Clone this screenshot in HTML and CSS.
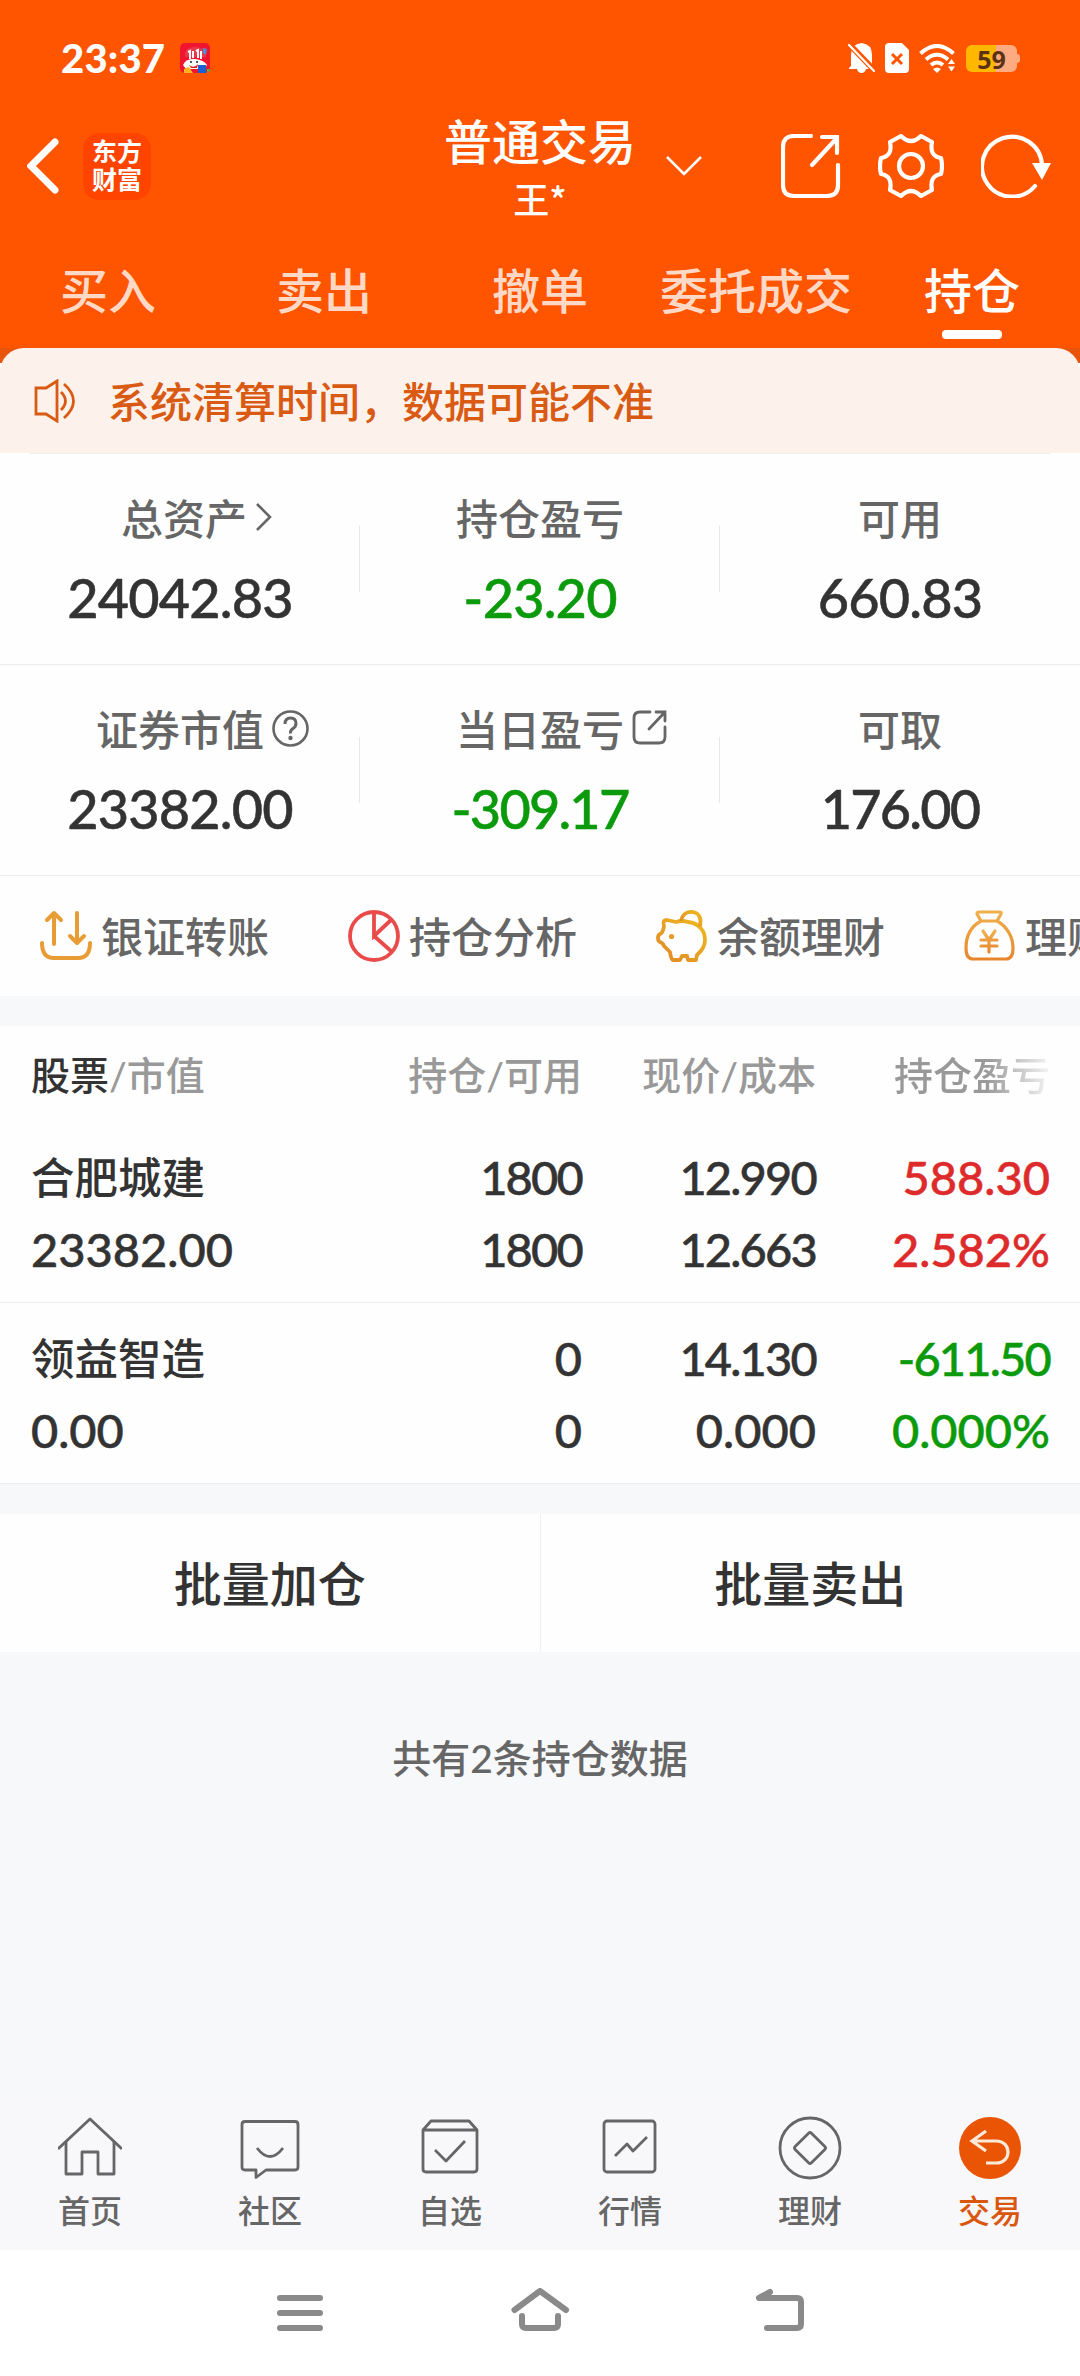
FILE: index.html
```html
<!DOCTYPE html>
<html lang="zh-CN">
<head>
    <meta charset="UTF-8">
    <meta name="viewport" content="width=device-width, initial-scale=1.0">
    <title>普通交易</title>
    <link rel="stylesheet" href="styles.css">
</head>
<body>
    <header class="header">
        <div class="status-bar">
            <span class="time">23:37</span>
            <svg class="app-badge" width="30" height="30" viewBox="0 0 30 30">
                <rect width="30" height="30" rx="5" fill="#f0142f"/>
                <path d="M5 14Q4 4 15 4t11 10z" fill="#e8384a"/>
                <path d="M23 5l4 1-1 6-3-2z" fill="#4f8fd8"/>
                <path d="M8 9l2-1v8M13 8v7M16 8l2-1v8M21 8v8" stroke="#fff" stroke-width="2" fill="none"/>
                <path d="M3 22Q6 15 15 16t12 6l-3 4H6z" fill="#fff"/>
                <path d="M9 22q5 4 9-1l-1 4h-6z" fill="#d22"/>
                <circle cx="11" cy="19" r="1" fill="#222"/>
                <circle cx="17" cy="19" r="1" fill="#222"/>
                <path d="M4 26l5-2 4 6H4z" fill="#ffb51b"/>
                <path d="M18 22h8v8h-8z" fill="#1d5fd0"/>
                <path d="M27 26h3v2l-3 2z" fill="#4fae4a"/>
            </svg>
            <div class="status-icons">
                <svg width="27" height="30" viewBox="0 0 27 30">
                    <path d="M3 23V12Q3 1 13.500 0Q24 1 24 12v11l2 2v1H18q-1 4-4.500 4T9 26H1v-1z" fill="#fff"/>
                    <path d="M-1 -1L28 29" stroke="#ff5500" stroke-width="6"/>
                    <path d="M1 2L26 28" stroke="#fff" stroke-width="2.200" stroke-linecap="round"/>
                </svg>
                <svg width="24" height="30" viewBox="0 0 24 30">
                    <path d="M4 0h13l7 7v19q0 4-4 4H4q-4 0-4-4V4q0-4 4-4z" fill="#fff"/>
                    <path d="M7 11l10 10M17 11L7 21" stroke="#ff5500" stroke-width="3"/>
                </svg>
                <svg width="37" height="29" viewBox="0 0 37 29">
                    <g fill="none" stroke="#fff" stroke-width="4">
                        <path d="M1.500 9.500Q18 -5.500 34.500 9.500"/>
                        <path d="M7 15.500Q18 6 29 15.500"/>
                        <path d="M12 21Q18 16 24 21"/>
                    </g>
                    <path d="M14 25q4-3 8 0l-4 4zM29 20l3.500-5 3.500 5zM29 22.500l3.500 5 3.500-5z" fill="#fff"/>
                </svg>
                <div class="battery">59</div>
            </div>
        </div>

        <div class="nav-bar">
            <div class="nav-left">
                <svg width="32" height="56" viewBox="0 0 32 56">
                    <path d="M28 4L4 28l24 24" fill="none" stroke="#fff" stroke-width="7" stroke-linecap="round"/>
                </svg>
                <div class="logo">东方<br>财富</div>
            </div>
            <div class="nav-title">
                <h1>普通交易</h1>
                <p>王*</p>
            </div>
            <div class="nav-right">
                <svg class="chevron" width="36" height="20" viewBox="0 0 36 20">
                    <path d="M1 1l17 17L35 1" fill="none" stroke="#fff" stroke-width="2.600"/>
                </svg>
                <svg class="share" width="60" height="64" viewBox="0 0 60 64">
                    <g fill="none" stroke="#fff" stroke-width="4.200" stroke-linecap="round">
                        <path d="M30 2H13Q2 2 2 13v38q0 11 11 11h33q11 0 11-11V31"/>
                        <path d="M41 3h15v16M56 4L31 31"/>
                    </g>
                </svg>
                <svg class="gear" width="66" height="64" viewBox="0 0 66 64">
                    <g fill="none" stroke="#fff" stroke-width="4.200" stroke-linejoin="round">
                        <path d="M23 2Q33 12 43 2L54 8Q51 22 63 24Q65 32 63 40Q51 42 54 56L43 62Q33 52 23 62L12 56Q15 42 3 40Q1 32 3 24Q15 22 12 8Z"/>
                        <circle cx="33" cy="32" r="12"/>
                    </g>
                </svg>
                <svg class="refresh" width="70" height="64" viewBox="0 0 70 64">
                    <path d="M54 52A30 30 0 1 1 61 31" fill="none" stroke="#fff" stroke-width="4.200" stroke-linecap="round"/>
                    <path d="M51 29h19l-9 17z" fill="#fff"/>
                </svg>
            </div>
        </div>

        <nav class="tabs">
            <div class="tab">买入</div>
            <div class="tab">卖出</div>
            <div class="tab">撤单</div>
            <div class="tab">委托成交</div>
            <div class="tab active">持仓</div>
        </nav>
    </header>

    <div class="notice-wrap">
        <div class="notice">
            <svg width="42" height="44" viewBox="0 0 42 44">
                <g fill="none" stroke="#d95a12" stroke-width="2.800">
                    <path d="M2 9h10l11-7v40l-11-7H2z"/>
                    <path d="M27 13q9 9 0 18M30 5q19 17 0 34"/>
                </g>
            </svg>
            <span>系统清算时间，数据可能不准</span>
        </div>
    </div>

    <section class="summary">
        <div class="summary-row">
            <div class="cell">
                <div class="label shifted">总资产
                    <svg class="label-icon arrow" width="18" height="30" viewBox="0 0 18 30">
                        <path d="M2 2l13 13L2 28" fill="none" stroke="#666" stroke-width="2.600"/>
                    </svg>
                </div>
                <div class="value">24042.83</div>
            </div>
            <div class="cell">
                <div class="label">持仓盈亏</div>
                <div class="value down">-23.20</div>
            </div>
            <div class="cell">
                <div class="label">可用</div>
                <div class="value">660.83</div>
            </div>
        </div>
        <div class="summary-row">
            <div class="cell">
                <div class="label">证券市值
                    <svg class="label-icon" width="37" height="37" viewBox="0 0 37 37">
                        <circle cx="18.500" cy="18.500" r="17" fill="none" stroke="#666" stroke-width="2.600"/>
                        <path d="M13 14q0-6 5.500-6t5.500 5.500q0 3-3 5t-2.500 5" fill="none" stroke="#666" stroke-width="3"/>
                        <circle cx="18.500" cy="28" r="2.200" fill="#666"/>
                    </svg>
                </div>
                <div class="value">23382.00</div>
            </div>
            <div class="cell">
                <div class="label">当日盈亏
                    <svg class="label-icon" width="36" height="36" viewBox="0 0 36 36">
                        <g fill="none" stroke="#666" stroke-width="2.800" stroke-linecap="round">
                            <path d="M18 2H8Q2 2 2 8v19q0 6 6 6h19q6 0 6-6V17"/>
                            <path d="M24 2h9v9M33 2L17 19"/>
                        </g>
                    </svg>
                </div>
                <div class="value down tight">-309.17</div>
            </div>
            <div class="cell">
                <div class="label">可取</div>
                <div class="value tight">176.00</div>
            </div>
        </div>
    </section>

    <section class="shortcuts">
        <div class="shortcut">
            <svg width="52" height="52" viewBox="0 0 52 52">
                <g fill="none" stroke="#e89c35" stroke-width="4" stroke-linecap="round" stroke-linejoin="round">
                    <path d="M2 33q0 15 12 15h24q12 0 12-15"/>
                    <path d="M14 34V3M7 10l7-7 7 7M37 3v30M30 26l7 7 7-7"/>
                </g>
            </svg>
            <span>银证转账</span>
        </div>
        <div class="shortcut">
            <svg width="52" height="52" viewBox="0 0 52 52">
                <g fill="none" stroke="#e94b4b" stroke-width="3.800">
                    <circle cx="26" cy="26" r="24"/>
                    <path d="M26 2v24l17-16M26 26l17 15"/>
                </g>
            </svg>
            <span>持仓分析</span>
        </div>
        <div class="shortcut">
            <svg width="52" height="52" viewBox="0 0 52 52">
                <defs>
                    <linearGradient id="pig" x1="0" y1="1" x2="1" y2="0">
                        <stop offset="0" stop-color="#e0882a"/>
                        <stop offset="1" stop-color="#efb91e"/>
                    </linearGradient>
                </defs>
                <g fill="none" stroke="url(#pig)" stroke-width="3.800" stroke-linejoin="round">
                    <path d="M8 16Q6 10 11 10L20 12Q26 10 32 12C43 13 49 21 49 30Q49 38 41 45L40 50H32L31 46H26L24 50H17Q15 50 14 42L8 36Q7 33 4 32Q2 31 2 28Q2 25 4 24Q7 23 8 16Z"/>
                    <path d="M25 11C27 -1 43 -1 44.500 10L44 17"/>
                </g>
                <circle cx="15.500" cy="26.500" r="2.600" fill="#e39a28"/>
            </svg>
            <span>余额理财</span>
        </div>
        <div class="shortcut">
            <svg width="52" height="52" viewBox="0 0 52 52">
                <defs>
                    <linearGradient id="bag" x1="0" y1="1" x2="0" y2="0">
                        <stop offset="0" stop-color="#e8862e"/>
                        <stop offset="1" stop-color="#efb04c"/>
                    </linearGradient>
                </defs>
                <g fill="none" stroke="url(#bag)" stroke-width="3.200" stroke-linecap="round" stroke-linejoin="round">
                    <path d="M17 11L13 4Q13 2 15 2H35Q38 2 37 4L33 11ZM17 11C6 17 2 28 2 38Q2 49 9 49H42Q49 49 49 38C49 28 44 17 33 11"/>
                    <path d="M19 21l6 9 6-9M25 30v12M17 30h16M17 36h16"/>
                </g>
            </svg>
            <span>理财</span>
        </div>
    </section>

    <section class="holdings">
        <div class="row head">
            <div><b>股票</b>/市值</div>
            <div>持仓/可用</div>
            <div>现价/成本</div>
            <div class="fade">持仓盈亏</div>
        </div>
        <div class="row">
            <div><span class="name">合肥城建</span>23382.00</div>
            <div class="tight">1800<br>1800</div>
            <div class="tight">12.990<br>12.663</div>
            <div class="up">588.30<br>2.582%</div>
        </div>
        <div class="row">
            <div><span class="name">领益智造</span>0.00</div>
            <div>0<br>0</div>
            <div><span class="tight">14.130</span><br>0.000</div>
            <div class="down"><span class="tight">-611.50</span><br>0.000%</div>
        </div>
    </section>

    <section class="batch">
        <div class="batch-btn">批量加仓</div>
        <div class="batch-btn">批量卖出</div>
    </section>

    <p class="count">共有2条持仓数据</p>

    <footer class="tab-bar">
        <div class="tab-item">
            <svg width="64" height="64" viewBox="0 0 64 64">
                <g fill="none" stroke="#666" stroke-width="2.800" stroke-linejoin="round">
                    <path d="M0 33L32 3l32 30"/>
                    <path d="M8 26v32h16V36h16v22h16V26"/>
                </g>
            </svg>
            <span>首页</span>
        </div>
        <div class="tab-item">
            <svg width="64" height="64" viewBox="0 0 64 64">
                <g fill="none" stroke="#666" stroke-width="2.800" stroke-linejoin="round">
                    <path d="M7 5.500h50q3 0 3 3V51q0 3-3 3H28l-10 7.500V54H7q-3 0-3-3V8.500q0-3 3-3z"/>
                    <path d="M19 32q13 17 26 0"/>
                </g>
            </svg>
            <span>社区</span>
        </div>
        <div class="tab-item">
            <svg width="64" height="64" viewBox="0 0 64 64">
                <g fill="none" stroke="#666" stroke-width="2.800" stroke-linejoin="round">
                    <path d="M5 14l8-9h38l8 9v39q0 3-3 3H8q-3 0-3-3zM5 14h54"/>
                    <path d="M17 34l11 11 19-20"/>
                </g>
            </svg>
            <span>自选</span>
        </div>
        <div class="tab-item">
            <svg width="64" height="64" viewBox="0 0 64 64">
                <g fill="none" stroke="#666" stroke-width="2.800" stroke-linejoin="round">
                    <rect x="6" y="5" width="51" height="51" rx="3"/>
                    <path d="M17 40l12-12 6 7 14-14"/>
                </g>
            </svg>
            <span>行情</span>
        </div>
        <div class="tab-item">
            <svg width="64" height="64" viewBox="0 0 64 64">
                <g fill="none" stroke="#666" stroke-width="2.800">
                    <circle cx="32" cy="32" r="30"/>
                    <rect x="20.500" y="20.500" width="23" height="23" rx="2" transform="rotate(45 32 32)"/>
                </g>
            </svg>
            <span>理财</span>
        </div>
        <div class="tab-item active">
            <svg width="64" height="64" viewBox="0 0 64 64">
                <circle cx="32" cy="32" r="31" fill="#e95504"/>
                <path d="M28 47h10c16 0 16-22 0-22H15M28 15L14 25l14 10" fill="none" stroke="#ffe9d8" stroke-width="3.200"/>
            </svg>
            <span>交易</span>
        </div>
    </footer>

    <div class="system-nav">
        <svg width="60" height="50" viewBox="0 0 60 50">
            <path d="M10 10h40M10 25h40M10 40h40" stroke="#8a8a8a" stroke-width="6" stroke-linecap="round"/>
        </svg>
        <svg width="60" height="50" viewBox="0 0 60 50">
            <g fill="none" stroke="#8a8a8a" stroke-width="6" stroke-linecap="round" stroke-linejoin="round">
                <path d="M4.500 22L30 3l26 19M12 28v8q0 4 4 4h28q4 0 4-4v-8"/>
            </g>
        </svg>
        <svg width="60" height="50" viewBox="0 0 60 50">
            <path d="M20 4L9 10h38q4 0 4 4v22q0 4-4 4H17" fill="none" stroke="#8a8a8a" stroke-width="6" stroke-linecap="round" stroke-linejoin="round"/>
        </svg>
    </div>
</body>
</html>
```
FILE: styles.css
```css
* {
    box-sizing: border-box;
}

body {
    display: flex;
    flex-direction: column;
    width: 1080px;
    height: 2376px;
    margin: 0;
    overflow: hidden;
    background: #f6f8fa;
    color: #333;
    font-family: Lato, "Noto Sans CJK SC", sans-serif;
    font-weight: 500;
}

svg {
    display: block;
    flex-shrink: 0;
}

h1, p {
    margin: 0;
    font-weight: 500;
}

/* Header */
.header {
    background: #ff5500;
    color: #fff;
}

.status-bar {
    display: flex;
    align-items: center;
    height: 116px;
    padding: 0 61px;
}

.time {
    font-size: 40px;
    font-weight: 900;
    letter-spacing: 0.2px;
}

.app-badge {
    margin-left: 15px;
}

.status-icons {
    display: flex;
    align-items: center;
    gap: 10px;
    margin-left: auto;
}

.battery {
    position: relative;
    width: 51px;
    height: 27px;
    margin-right: 2px;
    border-radius: 6px;
    background: linear-gradient(90deg, #ffb700 30px, #ffab82 30px);
    color: #5c3312;
    font-family: "Open Sans", sans-serif;
    font-size: 25px;
    font-weight: 700;
    line-height: 28px;
    text-align: center;
}

.battery::after {
    content: "";
    position: absolute;
    top: 9px;
    right: -3px;
    width: 3px;
    height: 9px;
    border-radius: 0 3px 3px 0;
    background: #ffab82;
}

.nav-bar {
    display: flex;
    justify-content: space-between;
    height: 100px;
}

.nav-left, .nav-right {
    display: flex;
    align-items: center;
    width: 443px;
}

.nav-left {
    gap: 24px;
    padding-left: 27px;
}

.logo {
    width: 68px;
    height: 67px;
    padding-top: 4px;
    border-radius: 16px;
    background: #ff4400;
    font-size: 25px;
    font-weight: 700;
    line-height: 28px;
    text-align: center;
}

.nav-title {
    padding-top: 2px;
    text-align: center;
}

.nav-title h1 {
    font-size: 48px;
    line-height: 48px;
}

.nav-title p {
    margin-top: 14px;
    font-family: "Noto Sans CJK SC", sans-serif;
    font-size: 36px;
    line-height: 36px;
}

.chevron {
    margin-left: 29px;
}

.share {
    margin-left: 79px;
}

.gear {
    margin-left: 37px;
}

.refresh {
    margin-left: 37px;
}

.tabs {
    display: flex;
    height: 132px;
}

.tab {
    display: flex;
    flex: 1;
    flex-direction: column;
    align-items: center;
    padding-top: 51px;
    color: #ffd9c6;
    font-size: 48px;
    line-height: 48px;
}

.tab.active {
    color: #fff;
}

.tab.active::after {
    content: "";
    width: 60px;
    height: 9px;
    margin-top: 15px;
    border-radius: 4px;
    background: #fff;
}

/* Notice */
.notice-wrap {
    background: linear-gradient(#e8540a 15px, #fff 15px);
}

.notice {
    display: flex;
    align-items: center;
    gap: 32px;
    height: 105px;
    padding-left: 34px;
    border-radius: 24px 24px 0 0;
    background: #fcf1eb;
    color: #d95a12;
    font-size: 42px;
    line-height: 42px;
}

.notice span {
    padding-top: 3px;
}

/* Account summary */
.summary {
    background: #fefefe;
}

.summary::before {
    content: "";
    display: block;
    height: 1px;
    margin: 0 30px;
    background: #eee;
}

.summary-row {
    display: flex;
    height: 211px;
    border-bottom: 1px solid #ededed;
}

.cell {
    position: relative;
    display: flex;
    flex: 1;
    flex-direction: column;
    align-items: center;
    padding-top: 44px;
}

.cell + .cell::before {
    content: "";
    position: absolute;
    top: 72px;
    left: -1px;
    width: 1px;
    height: 66px;
    background: #e8e8e8;
}

.label {
    position: relative;
    color: #666;
    font-size: 42px;
    line-height: 42px;
}

.label.shifted {
    margin-left: 8px;
}

.label-icon {
    position: absolute;
    top: 1px;
    left: calc(100% + 8px);
}

.label-icon.arrow {
    top: 4px;
}

.value {
    margin-top: 28px;
    font-size: 54px;
    letter-spacing: -0.8px;
    line-height: 60px;
}

.value, .row {
    -webkit-text-stroke: 0.5px;
}

.up {
    color: #dd2b2b;
}

.down {
    color: #0b9a0b;
}

.tight {
    letter-spacing: -1.8px;
}

/* Shortcuts */
.shortcuts {
    display: flex;
    align-items: center;
    gap: 80px;
    height: 120px;
    padding-left: 40px;
    overflow: hidden;
    background: #fefefe;
}

.shortcut {
    display: flex;
    flex-shrink: 0;
    align-items: center;
    gap: 9px;
    width: 228px;
    color: #666;
    font-size: 42px;
    line-height: 42px;
    white-space: nowrap;
}

.shortcut span {
    padding-top: 2px;
}

/* Holdings */
.holdings {
    margin-top: 30px;
    background: #fefefe;
}

.row {
    display: grid;
    grid-template-columns: 282px 270px 234px 234px;
    height: 181px;
    padding: 19px 30px 0;
    border-bottom: 1px solid #ededed;
    font-size: 47px;
    line-height: 72px;
    text-align: right;
}

.row > :first-child {
    padding-left: 1px;
    text-align: left;
}

.row.head {
    height: 96px;
    padding-top: 1px;
    border: 0;
    color: #999;
    font-size: 39px;
    line-height: 96px;
    -webkit-text-stroke: 0;
}

.head b {
    color: #333;
    font-weight: 500;
}

.fade {
    background: linear-gradient(90deg, #999 170px, rgba(153, 153, 153, 0.1));
    background-clip: text;
    -webkit-background-clip: text;
    color: transparent;
}

.name {
    display: block;
    height: 72px;
    font-size: 43.5px;
    -webkit-text-stroke: 0;
}

/* Batch buttons */
.batch {
    display: flex;
    margin-top: 30px;
    background: #fefefe;
}

.batch-btn {
    flex: 1;
    height: 138px;
    font-size: 48px;
    line-height: 140px;
    text-align: center;
}

.batch-btn:first-child {
    border-right: 1px solid #f0f0f0;
}

.count {
    margin-top: 77px;
    color: #666;
    font-size: 39px;
    line-height: 58px;
    text-align: center;
}

/* Bottom tabs */
.tab-bar {
    display: flex;
    height: 153px;
    margin-top: auto;
    padding-top: 19px;
    background: #f8f8fb;
}

.tab-item {
    display: flex;
    flex: 1;
    flex-direction: column;
    align-items: center;
    gap: 15px;
    color: #666;
    font-size: 32px;
    line-height: 32px;
}

.tab-item.active {
    color: #d9570f;
}

.system-nav {
    display: flex;
    align-items: center;
    justify-content: center;
    gap: 180px;
    height: 126px;
    background: #fff;
}
```
